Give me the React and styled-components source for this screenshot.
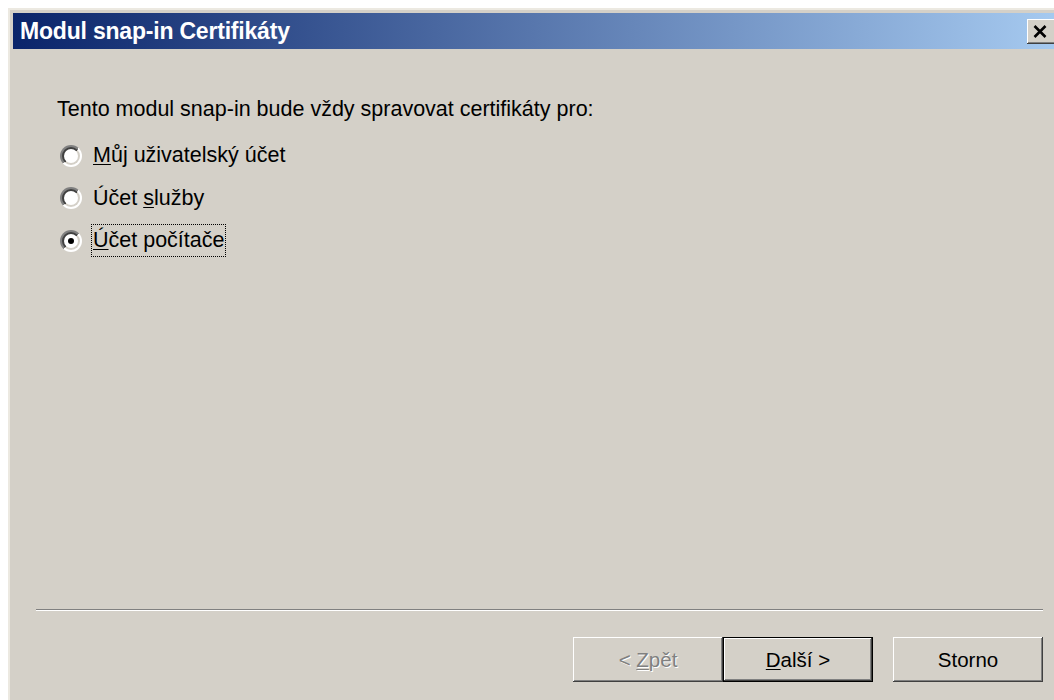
import styled, { createGlobalStyle } from "styled-components";

const GlobalStyle = createGlobalStyle`
    html, body {
        margin: 0;
        padding: 0;
        background: #ffffff;
    }

    body {
        font-family: "Liberation Sans", Arial, sans-serif;
    }
`;

const Desktop = styled.div`
    width: 1054px;
    height: 700px;
    overflow: hidden;
    background: #ffffff;
`;

const Window = styled.div`
    margin: 8px 0 0 8px;
    width: 1046px;
    padding: 3px;
    background: #d4d0c8;
    border-top: 2px solid #ece9e1;
    border-left: 2px solid #ece9e1;
`;

const TitleBar = styled.div`
    height: 36px;
    display: flex;
    align-items: center;
    justify-content: space-between;
    padding: 0 2px 0 7px;
    background: linear-gradient(90deg, #0a246a 0%, #a6caf0 100%);
`;

const Title = styled.span`
    color: #ffffff;
    font-weight: bold;
    font-size: 23px;
    letter-spacing: -0.2px;
`;

const CloseButton = styled.div`
    width: 30px;
    height: 25px;
    display: flex;
    align-items: center;
    padding-left: 6px;
    box-sizing: border-box;
    background: #d4d0c8;
    box-shadow: inset -1px -1px #404040, inset 1px 1px #ffffff,
        inset -2px -2px #808080;

    svg {
        width: 14px;
        height: 13px;
    }
`;

const Body = styled.div`
    height: 651px;
    display: flex;
    flex-direction: column;
    font-size: 21.5px;
    color: #000000;
`;

const Content = styled.div`
    flex: 1;
    padding: 47px 0 0 44px;
`;

const Prompt = styled.p`
    margin: 0 0 18px;
    line-height: 26px;
`;

const Options = styled.div`
    display: flex;
    flex-direction: column;
    gap: 11.5px;
`;

const Option = styled.label`
    display: flex;
    align-items: center;
    gap: 10px;
    height: 31px;
`;

// classic sunken radio: grey/white outer ring, dark/face inner ring, white well
const RadioWrap = styled.span`
    width: 22px;
    height: 22px;
    margin-left: 3px;
    border-radius: 50%;
    background: linear-gradient(135deg, #808080 50%, #ffffff 50%);
    display: flex;
    align-items: center;
    justify-content: center;
    flex-shrink: 0;
`;

const RadioRing = styled.span`
    width: 18px;
    height: 18px;
    border-radius: 50%;
    background: linear-gradient(135deg, #404040 50%, #d4d0c8 50%);
    display: flex;
    align-items: center;
    justify-content: center;
`;

const RadioWell = styled.span`
    width: 14px;
    height: 14px;
    border-radius: 50%;
    background: #ffffff;
    display: flex;
    align-items: center;
    justify-content: center;

    &::after {
        content: "";
        width: 6px;
        height: 6px;
        border-radius: 50%;
        background: ${({ $checked }) => ($checked ? "#000000" : "transparent")};
    }
`;

const Label = styled.span`
    padding: 3px 1px 4px;
    line-height: 24px;
    outline: ${({ $focused }) => ($focused ? "1px dotted #000000" : "none")};
`;

const Key = styled.u`
    text-decoration-thickness: 1px;
    text-underline-offset: 2px;
`;

const Footer = styled.div`
    padding: 0 16px 18px 23px;
`;

const Separator = styled.div`
    height: 0;
    border-top: 1px solid #808080;
    border-bottom: 1px solid #ffffff;
    margin-bottom: 26px;
`;

const ButtonRow = styled.div`
    display: flex;
    justify-content: flex-end;
`;

const Button = styled.button`
    width: 150px;
    height: 45px;
    margin-left: ${({ $gap }) => $gap || 0}px;
    font-family: "Liberation Sans", Arial, sans-serif;
    font-size: 20.5px;
    background: #d4d0c8;
    border: ${({ $default }) => ($default ? "1px solid #000000" : "none")};
    padding: 0;
    color: ${({ disabled }) => (disabled ? "#808080" : "#000000")};
    text-shadow: ${({ disabled }) => (disabled ? "1px 1px #ffffff" : "none")};
    box-shadow: inset -1px -1px #404040, inset 1px 1px #ffffff,
        inset -2px -2px #808080;
`;

const options = [
    { key: "M", rest: "ůj uživatelský účet" },
    { lead: "Účet ", key: "s", rest: "lužby" },
    { key: "Ú", rest: "čet počítače", checked: true },
];

const App = () => {
    return (
        <Desktop>
            <GlobalStyle />
            <Window>
                <TitleBar>
                    <Title>Modul snap-in Certifikáty</Title>
                    <CloseButton>
                        <svg viewBox="0 0 14 13">
                            <path d="M1.5 1 L12.5 12 M12.5 1 L1.5 12" stroke="#000" strokeWidth="2.6" />
                        </svg>
                    </CloseButton>
                </TitleBar>

                <Body>
                    <Content>
                        <Prompt>Tento modul snap-in bude vždy spravovat certifikáty pro:</Prompt>
                        <Options>
                            {options.map((o) => (
                                <Option key={o.key}>
                                    <RadioWrap>
                                        <RadioRing>
                                            <RadioWell $checked={o.checked} />
                                        </RadioRing>
                                    </RadioWrap>
                                    <Label $focused={o.checked}>
                                        {o.lead}
                                        <Key>{o.key}</Key>
                                        {o.rest}
                                    </Label>
                                </Option>
                            ))}
                        </Options>
                    </Content>

                    <Footer>
                        <Separator />
                        <ButtonRow>
                            <Button disabled>&lt; <Key>Z</Key>pět</Button>
                            <Button $default><Key>D</Key>alší &gt;</Button>
                            <Button $gap={20}>Storno</Button>
                        </ButtonRow>
                    </Footer>
                </Body>
            </Window>
        </Desktop>
    );
};

export default App;
